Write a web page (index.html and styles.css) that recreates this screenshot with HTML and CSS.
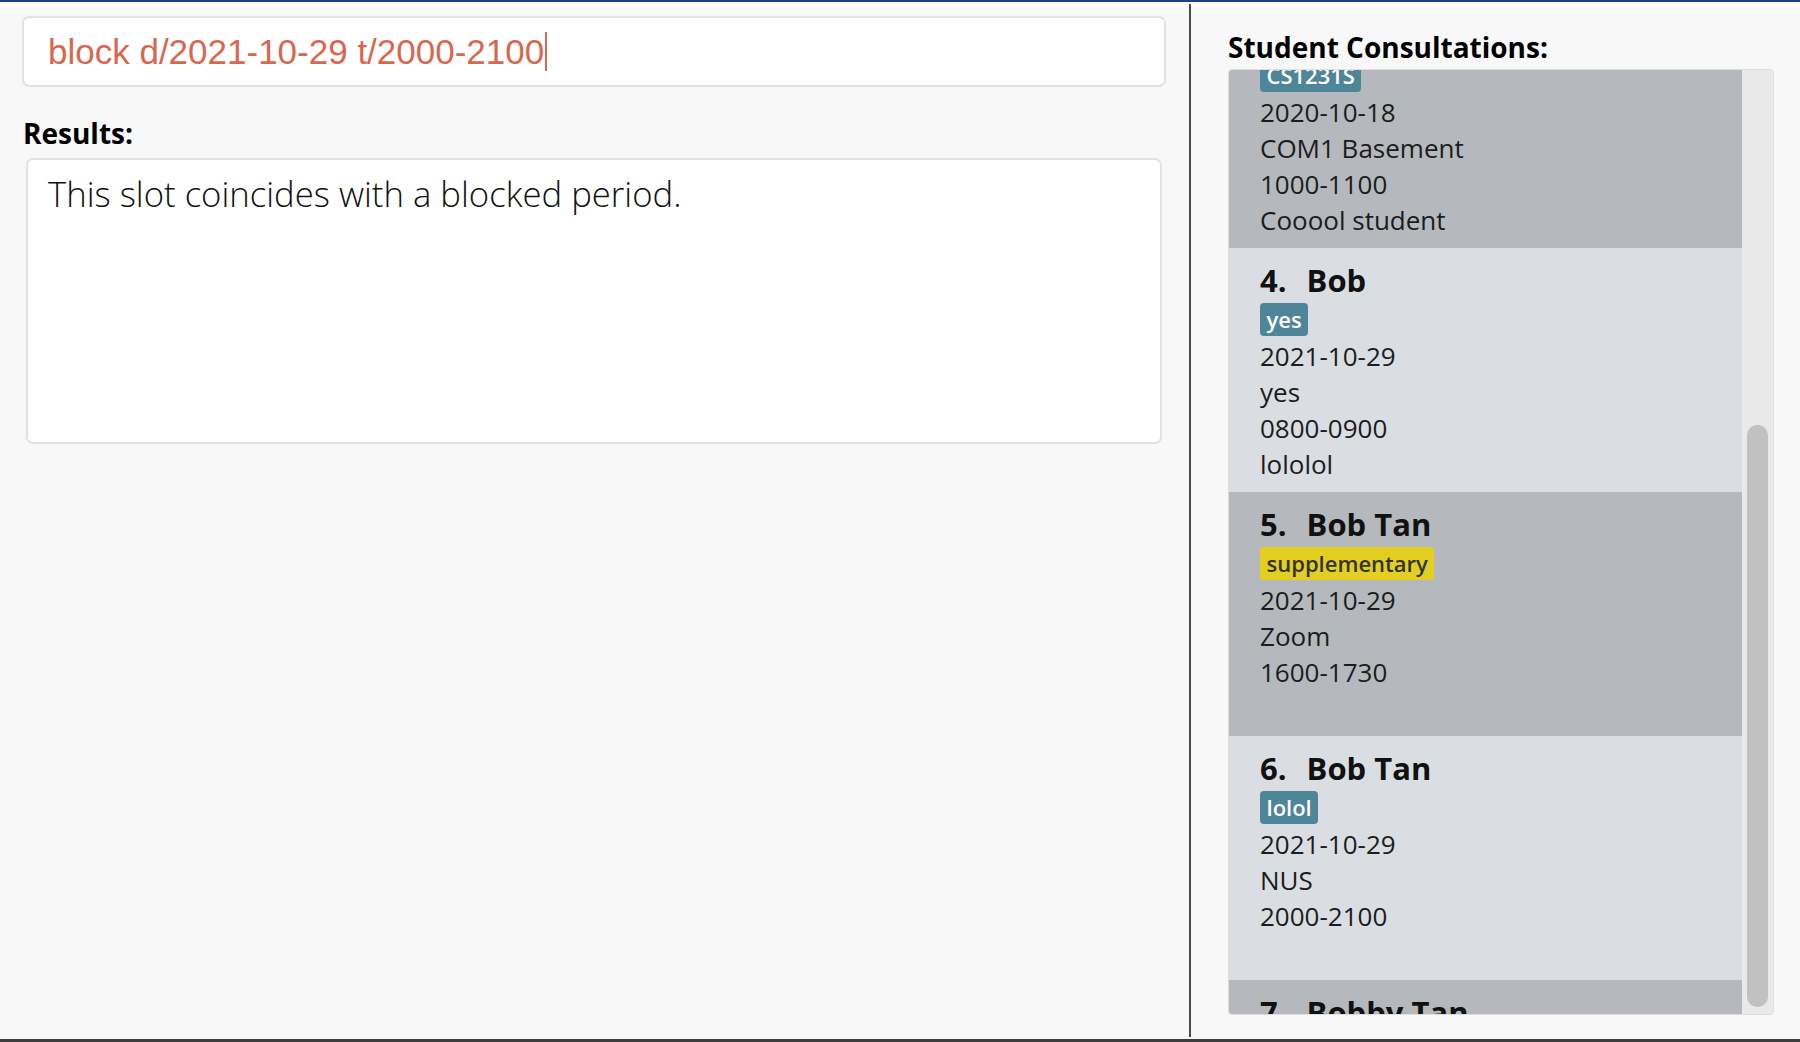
FILE: index.html
```html
<!DOCTYPE html>
<html lang="en">
<head>
<meta charset="utf-8">
<title>Student Consultations</title>
<link rel="stylesheet" href="styles.css">
</head>
<body>
<div class="app">
  <div class="topbar"></div>
  <div class="main">
    <section class="left">
      <div class="command-box"><span class="command-text">block d/2021-10-29 t/2000-2100</span><span class="caret"></span></div>
      <div class="label">Results:</div>
      <div class="result-box">This slot coincides with a blocked period.</div>
    </section>
    <div class="divider"></div>
    <section class="right">
      <div class="label">Student Consultations:</div>
      <div class="list">
        <div class="viewport">
          <div class="card dark first">
            <div class="tags"><span class="tag">CS1231S</span></div>
            <div class="line">2020-10-18</div>
            <div class="line">COM1 Basement</div>
            <div class="line">1000-1100</div>
            <div class="line">Cooool student</div>
          </div>
          <div class="card light">
            <div class="card-title"><span>4.</span><span>Bob</span></div>
            <div class="tags"><span class="tag">yes</span></div>
            <div class="line">2021-10-29</div>
            <div class="line">yes</div>
            <div class="line">0800-0900</div>
            <div class="line">lololol</div>
          </div>
          <div class="card dark">
            <div class="card-title"><span>5.</span><span>Bob Tan</span></div>
            <div class="tags"><span class="tag yellow">supplementary</span></div>
            <div class="line">2021-10-29</div>
            <div class="line">Zoom</div>
            <div class="line">1600-1730</div>
            <div class="line"></div>
          </div>
          <div class="card light">
            <div class="card-title"><span>6.</span><span>Bob Tan</span></div>
            <div class="tags"><span class="tag">lolol</span></div>
            <div class="line">2021-10-29</div>
            <div class="line">NUS</div>
            <div class="line">2000-2100</div>
            <div class="line"></div>
          </div>
          <div class="card dark">
            <div class="card-title"><span>7.</span><span>Bobby Tan</span></div>
          </div>
        </div>
        <div class="scrollbar"><div class="thumb"></div></div>
      </div>
    </section>
  </div>
  <div class="bottombar"></div>
</div>
</body>
</html>
```
FILE: styles.css
```css
html, body {
  margin: 0;
  padding: 0;
}
body {
  background: #f8f8f8;
  font-family: "Open Sans", "Noto Sans", sans-serif;
  overflow: hidden;
}
.app {
  height: 1042px;
  display: flex;
  flex-direction: column;
}
.topbar {
  height: 2px;
  background: #1d3f7e;
}
.bottombar {
  height: 3px;
  background: #3c3c3c;
}
.main {
  flex: 1;
  display: flex;
  min-height: 0;
}
.left {
  width: 1189px;
  box-sizing: border-box;
  padding: 14px 0 0 22px;
}
.command-box {
  width: 1144px;
  height: 71px;
  box-sizing: border-box;
  border: 2px solid #e2e2e2;
  border-radius: 7px;
  background: #fff;
  display: flex;
  align-items: center;
  padding-left: 24px;
}
.command-text {
  font-family: "Liberation Sans", Arial, sans-serif;
  font-size: 35px;
  line-height: 39px;
  color: #d9674f;
}
.caret {
  width: 2px;
  height: 39px;
  margin-left: 1px;
  background: #d9674f;
}
.label {
  font-weight: 700;
  font-size: 28px;
  line-height: 36px;
  color: #000;
}
.left .label {
  margin: 28px 0 0 1px;
}
.result-box {
  margin: 7px 0 0 4px;
  width: 1136px;
  height: 286px;
  box-sizing: border-box;
  border: 2px solid #e2e2e2;
  border-radius: 7px;
  background: #fff;
  padding: 10px 20px;
  font-size: 34.7px;
  font-weight: 300;
  line-height: 48px;
  color: #111;
}
.divider {
  width: 2px;
  background: #4a4a4a;
  margin: 2px 0;
}
.right {
  flex: 1;
  display: flex;
  flex-direction: column;
  padding: 27px 0 0 37px;
}
.right .label {
  margin-bottom: 4px;
}
.list {
  width: 546px;
  height: 946px;
  box-sizing: border-box;
  border: 1px solid #dedede;
  border-radius: 4px;
  background: #e9e9e9;
  display: flex;
  overflow: hidden;
}
.viewport {
  width: 513px;
  overflow: hidden;
}
.scrollbar {
  width: 31px;
  box-sizing: border-box;
  padding: 355px 5px 7px 5px;
  display: flex;
}
.thumb {
  flex: 1;
  background: #c1c1c1;
  border-radius: 10px;
}
.card {
  height: 244px;
  box-sizing: border-box;
  padding: 12px 0 0 31px;
  color: #1c1c1c;
  font-size: 26px;
  line-height: 36px;
}
.card.first {
  height: 189px;
  padding-top: 0;
  margin-top: -14px;
}
.card.dark {
  background: #b5b9bd;
}
.card.light {
  background: #dadee2;
}
.card-title {
  display: flex;
  gap: 20px;
  font-weight: 700;
  font-size: 31px;
  line-height: 40px;
  color: #111;
}
.tags {
  display: flex;
  gap: 6px;
  margin: 3px 0 2px;
}
.tag {
  height: 33px;
  line-height: 33px;
  padding: 0 6.5px;
  border-radius: 4px;
  font-size: 22px;
  font-weight: 600;
  background: #4f8598;
  color: #fff;
}
.tag.yellow {
  background: #e3cf1f;
  color: #333;
}
.line {
  height: 36px;
}
```
